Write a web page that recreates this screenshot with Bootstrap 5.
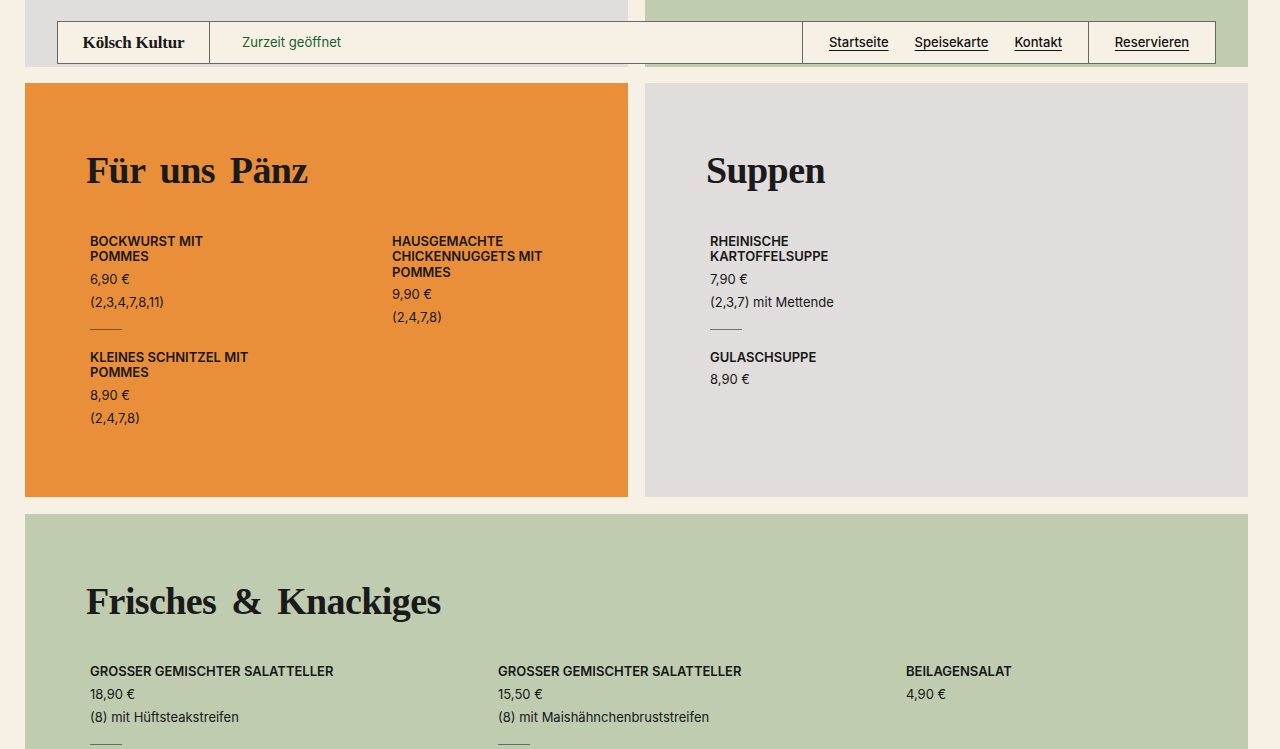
<!doctype html>
<html lang="de">
<head>
<meta charset="utf-8">
<title>Kölsch Kultur – Speisekarte</title>
<link href="https://cdn.jsdelivr.net/npm/bootstrap@5.3.0/dist/css/bootstrap.min.css" rel="stylesheet">
<style>
html,body{height:749px;overflow:hidden}
body{background:#f7f1e5;color:#171717;font-family:Inter,"Liberation Sans",sans-serif;font-size:13px;line-height:23px}
.sheet{padding:0 32px 0 25px}
.sheet .row{--bs-gutter-x:17px}
.tile{padding:0 65px}
.tile-top{height:67px}
.tile-main{height:414px}
.tile-tall{height:300px;margin-top:.5px}
.t-grey{background:#e0dddc}.t-orange{background:#e98f3a}.t-green{background:#bfccb0}
.topbar{left:57px;top:21px;width:1159px;height:43px;background:#f7f1e5;border:1px solid #666a64;z-index:10}
.brand-cell{width:152px;border-right:1px solid #666a64;font:700 17px/1 "Liberation Serif",serif;letter-spacing:-.2px;color:#171717}
.status{padding-left:32px;color:#15612b;font-size:13.1px}
.links-cell{width:286px;border-left:1px solid #666a64;gap:26px}
.cta-cell{width:127px;border-left:1px solid #666a64}
.topbar a{color:#111;font-weight:500;font-size:13px;text-decoration:underline;text-underline-offset:3px}
.sec-title{height:150.5px;margin:0 0 0 -4px;padding-top:62px;font:700 38px/50px "Liberation Serif",serif;letter-spacing:-.6px;word-spacing:6px;color:#1a1a1a}
.dish-grid{display:grid;column-gap:131px}
.cols-2{grid-template-columns:1fr 1fr}
.cols-3{grid-template-columns:1fr 1fr 1fr}
.dish-name{font-weight:600;font-size:13px;line-height:15.5px;text-transform:uppercase;margin:0 0 3px}
.dish-line{margin:0}
.dish-rule{width:32px;height:1px;margin:15px 0 20px;background:rgba(30,30,30,.55);border:0;opacity:1}
</style>
</head>
<body>
<nav class="topbar position-fixed d-flex align-items-stretch">
  <div class="brand-cell d-flex align-items-center justify-content-center">Kölsch Kultur</div>
  <div class="status flex-grow-1 d-flex align-items-center">Zurzeit geöffnet</div>
  <div class="links-cell d-flex align-items-center justify-content-center">
    <a href="#">Startseite</a><a href="#">Speisekarte</a><a href="#">Kontakt</a>
  </div>
  <div class="cta-cell d-flex align-items-center justify-content-center"><a href="#">Reservieren</a></div>
</nav>
<main class="sheet">
  <div class="row g-3">
    <div class="col-6"><div class="tile tile-top t-grey"></div></div>
    <div class="col-6"><div class="tile tile-top t-green"></div></div>

    <div class="col-6">
      <section class="tile tile-main t-orange">
        <h2 class="sec-title">Für uns Pänz</h2>
        <div class="dish-grid cols-2">
          <div>
            <h3 class="dish-name">Bockwurst mit Pommes</h3>
            <p class="dish-line">6,90 €</p>
            <p class="dish-line">(2,3,4,7,8,11)</p>
            <hr class="dish-rule">
            <h3 class="dish-name">Kleines Schnitzel mit Pommes</h3>
            <p class="dish-line">8,90 €</p>
            <p class="dish-line">(2,4,7,8)</p>
          </div>
          <div>
            <h3 class="dish-name">Hausgemachte Chickennuggets mit Pommes</h3>
            <p class="dish-line">9,90 €</p>
            <p class="dish-line">(2,4,7,8)</p>
          </div>
        </div>
      </section>
    </div>

    <div class="col-6">
      <section class="tile tile-main t-grey">
        <h2 class="sec-title">Suppen</h2>
        <div class="dish-grid cols-2">
          <div>
            <h3 class="dish-name">Rheinische Kartoffelsuppe</h3>
            <p class="dish-line">7,90 €</p>
            <p class="dish-line">(2,3,7) mit Mettende</p>
            <hr class="dish-rule">
            <h3 class="dish-name">Gulaschsuppe</h3>
            <p class="dish-line">8,90 €</p>
          </div>
        </div>
      </section>
    </div>

    <div class="col-12">
      <section class="tile tile-tall t-green">
        <h2 class="sec-title">Frisches &amp; Knackiges</h2>
        <div class="dish-grid cols-3">
          <div>
            <h3 class="dish-name">Grosser gemischter Salatteller</h3>
            <p class="dish-line">18,90 €</p>
            <p class="dish-line">(8) mit Hüftsteakstreifen</p>
            <hr class="dish-rule">
          </div>
          <div>
            <h3 class="dish-name">Grosser gemischter Salatteller</h3>
            <p class="dish-line">15,50 €</p>
            <p class="dish-line">(8) mit Maishähnchenbruststreifen</p>
            <hr class="dish-rule">
          </div>
          <div>
            <h3 class="dish-name">Beilagensalat</h3>
            <p class="dish-line">4,90 €</p>
          </div>
        </div>
      </section>
    </div>
  </div>
</main>
<script src="https://cdn.jsdelivr.net/npm/bootstrap@5.3.0/dist/js/bootstrap.bundle.min.js"></script>
</body>
</html>
